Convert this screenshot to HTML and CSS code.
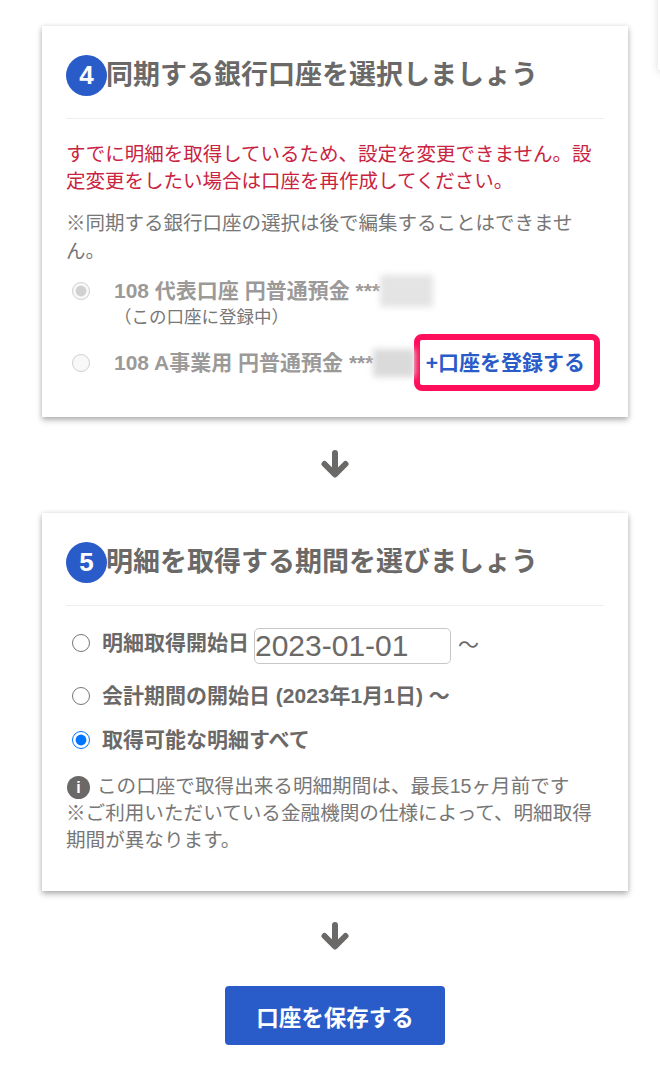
FILE: index.html
```html
<!DOCTYPE html>
<html lang="ja">
<head>
<meta charset="utf-8">
<title>口座設定</title>
<link rel="stylesheet" href="styles.css">
</head>
<body>
<div class="edge"></div>
<main class="page">
  <section class="card card-a">
    <h2 class="heading"><span class="step">4</span><span>同期する銀行口座を選択しましょう</span></h2>
    <p class="error">すでに明細を取得しているため、設定を変更できません。設定変更をしたい場合は口座を再作成してください。</p>
    <p class="note">※同期する銀行口座の選択は後で編集することはできません。</p>
    <div class="account account-first">
      <input class="radio" type="radio" name="acc" checked disabled>
      <div class="account-body">
        <div class="account-name">108 代表口座 円普通預金 ***<span class="blur blur-a"></span></div>
        <div class="account-sub">（この口座に登録中）</div>
      </div>
    </div>
    <div class="account account-second">
      <input class="radio" type="radio" name="acc" disabled>
      <div class="account-name">108 A事業用 円普通預金 ***<span class="blur blur-b"></span></div>
      <a class="add-link" href="#">+口座を登録する</a>
    </div>
  </section>

  <svg class="arrow" viewBox="0 0 30 28"><path d="M15 3v21M4.500 14 15 24.500 25.500 14"/></svg>

  <section class="card card-b">
    <h2 class="heading"><span class="step">5</span><span>明細を取得する期間を選びましょう</span></h2>
    <label class="period period-date">
      <input class="radio" type="radio" name="period">
      <span class="period-label">明細取得開始日</span>
      <input class="date" type="text" value="2023-01-01">
      <span class="tilde">～</span>
    </label>
    <label class="period period-fiscal">
      <input class="radio" type="radio" name="period">
      <span class="period-label">会計期間の開始日 (2023年1月1日) ～</span>
    </label>
    <label class="period period-all">
      <input class="radio" type="radio" name="period" checked>
      <span class="period-label">取得可能な明細すべて</span>
    </label>
    <p class="info"><span class="info-icon">i</span>この口座で取得出来る明細期間は、最長15ヶ月前です<br>※ご利用いただいている金融機関の仕様によって、明細取得期間が異なります。</p>
  </section>

  <svg class="arrow arrow-low" viewBox="0 0 30 28"><path d="M15 3v21M4.500 14 15 24.500 25.500 14"/></svg>

  <button class="save" type="button">口座を保存する</button>
</main>
</body>
</html>
```

FILE: styles.css
```css
* { box-sizing: border-box; }
html, body { margin: 0; height: 1066px; overflow: hidden; background: #fff; }
body {
  font-family: "Liberation Sans", "Noto Sans CJK JP", sans-serif;
  color: #6b6967;
  position: relative;
}
.edge {
  position: absolute;
  left: 658px;
  top: -20px;
  width: 20px;
  height: 90px;
  background: #fff;
  box-shadow: 0 2px 8px rgba(0, 0, 0, .14);
}
.page {
  display: flex;
  flex-direction: column;
  align-items: center;
  padding: 26px 32px 0 42px;
}
.card {
  width: 586px;
  flex: none;
  background: #fff;
  padding: 24px;
  box-shadow: 0 3px 6px rgba(0, 0, 0, .3), 0 0 5px rgba(0, 0, 0, .08);
}
.card-a { height: 391px; }
.card-b { height: 378px; }
.heading {
  display: flex;
  align-items: center;
  gap: 0;
  margin: 0 0 22px;
  padding-bottom: 18px;
  height: 69px;
  border-bottom: 1px solid #eee;
  font-size: 27px;
  line-height: 40px;
  font-weight: 700;
  color: #6b6967;
}
.step {
  flex: none;
  width: 41px;
  height: 41px;
  margin-right: -1px;
  border-radius: 50%;
  background: #2a5cc9;
  color: #fff;
  text-align: center;
  font-size: 26px;
}
.error {
  margin: 0 0 14px;
  font-size: 19.500px;
  line-height: 27px;
  color: #c9243f;
}
.note {
  margin: 0 0 11px;
  font-size: 19.500px;
  line-height: 28px;
  color: #777;
}
.radio {
  flex: none;
  width: 18px;
  height: 18px;
  margin: 0;
  accent-color: #0075ff;
}
.account { display: flex; color: #9b9a99; padding-left: 6px; }
.account-first { height: 58px; align-items: flex-start; }
.account-first .radio { margin-top: 6px; }
.account-body { margin-left: 24px; }
.account-name {
  display: flex;
  align-items: center;
  height: 30px;
  font-size: 21px;
  line-height: 30px;
  font-weight: 700;
  white-space: nowrap;
}
.account-sub { font-size: 17.500px; line-height: 24px; color: #777; margin-top: -1px; }
.account-second { align-items: center; height: 57px; }
.account-second .account-name { margin-left: 24px; }
.blur { flex: none; display: block; background: #dadada; filter: blur(3px); }
.blur-a { width: 53px; height: 32px; background: #e4e4e4; }
.blur-b { width: 42px; height: 28px; }
.add-link {
  margin-left: -1px;
  flex: none;
  width: 186px;
  height: 57px;
  padding-right: 4px;
  border: 6px solid #ff0f5b;
  border-radius: 8px;
  color: #2a5cc9;
  font-size: 21px;
  line-height: 45px;
  font-weight: 700;
  text-align: center;
  text-decoration: none;
  white-space: nowrap;
}
.arrow {
  width: 30px;
  height: 28px;
  margin: 33px 0 35px;
  fill: none;
  stroke: #6b6967;
  stroke-width: 6px;
  stroke-linecap: round;
  stroke-linejoin: round;
  flex: none;
}
.arrow-low { margin: 31px 0 36px; }
.period { display: flex; align-items: center; padding-left: 6px; font-weight: 700; }
.period-date { height: 40px; margin-top: -5px; }
.period-fiscal { height: 32px; margin-top: 17px; }
.period-all { height: 32px; margin-top: 12px; }
.period-label { margin-left: 12px; font-size: 21px; line-height: 30px; white-space: nowrap; }
.date {
  flex: none;
  width: 197px;
  height: 36px;
  margin: 6px 0 0 5px;
  padding: 0;
  border: 1px solid #c8c8c8;
  border-radius: 5px;
  font: 400 30px "Liberation Sans", sans-serif;
  color: #6b6967;
}
.tilde { margin-left: 7px; font-size: 21px; font-weight: 400; }
.info {
  margin: 17px 0 0;
  font-size: 19.600px;
  line-height: 27px;
  color: #777;
}
.info-icon {
  display: inline-block;
  width: 23px;
  height: 23px;
  margin: -4px 7px -4px 1px;
  border-radius: 50%;
  background: #6b6967;
  color: #fff;
  font: 700 16px/23px "Liberation Sans", sans-serif;
  text-align: center;
  vertical-align: 0;
}
.save {
  flex: none;
  width: 220px;
  height: 59px;
  border: 0;
  border-radius: 4px;
  background: #2a5cc9;
  color: #fff;
  font: 700 22.500px "Liberation Sans", "Noto Sans CJK JP", sans-serif;
}
```
